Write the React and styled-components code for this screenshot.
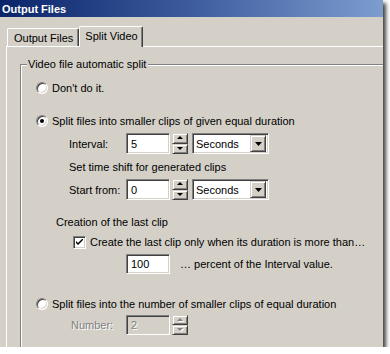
import styled, { createGlobalStyle } from 'styled-components'

const GlobalStyle = createGlobalStyle`
  html, body {
    margin: 0;
    padding: 0;
    background: #ffffff;
  }
  body {
    font-family: "Liberation Sans", Arial, sans-serif;
    font-size: 11px;
    color: #000000;
  }
`

const face = '#d4d0c8'
const shadow = '#808080'
const darkShadow = '#404040'

//------------------Window------------------

const Window = styled.div`
  width: 383px;
  height: 347px;
  background: ${face};
  display: flex;
  flex-direction: column;
  box-shadow: 3px 3px 4px rgba(0, 0, 0, 0.75);
  overflow: hidden;
`

const TitleBar = styled.div`
  height: 17px;
  flex-shrink: 0;
  display: flex;
  align-items: center;
  padding-left: 2px;
  background: linear-gradient(to right, #0a246a 0%, #3d5c9e 50%, #7d9dcf 100%);
  color: #ffffff;
  font-weight: bold;
  font-size: 11px;
`

const Body = styled.div`
  flex: 1;
  display: flex;
  flex-direction: column;
  padding: 9px 0 0 6px;
`

//------------------Tabs------------------

const TabStrip = styled.div`
  display: flex;
  align-items: flex-end;
  height: 20px;
  padding-left: 1px;
`

const Tab = styled.div`
  position: relative;
  box-sizing: border-box;
  height: ${({ $active }) => ($active ? '21px' : '18px')};
  margin-bottom: ${({ $active }) => ($active ? '-1px' : '0')};
  padding: ${({ $active }) => ($active ? '3px 4px 0 5px' : '3px 5px 0 6px')};
  border-top: 1px solid #ffffff;
  border-left: 1px solid #ffffff;
  border-right: 1px solid ${darkShadow};
  box-shadow: inset -1px 0 0 ${shadow};
  border-radius: 2px 2px 0 0;
  background: ${face};
  z-index: ${({ $active }) => ($active ? 2 : 1)};
  white-space: nowrap;
`

const TabPage = styled.div`
  flex: 1;
  border-top: 1px solid #ffffff;
  border-left: 1px solid #ffffff;
  padding: 17px 0 0 13px;
`

//------------------Group box------------------

const GroupBox = styled.div`
  position: relative;
  height: 400px;
  border-top: 1px solid ${shadow};
  border-left: 1px solid ${shadow};
  box-shadow: inset 1px 1px 0 #ffffff;
  display: flex;
  flex-direction: column;
`

const Legend = styled.span`
  position: absolute;
  top: -8px;
  left: 6px;
  padding: 0 2px 0 1px;
  background: ${face};
  line-height: 14px;
`

const Row = styled.div`
  display: flex;
  align-items: center;
  height: ${({ $h }) => $h}px;
  margin-top: ${({ $top }) => $top}px;
  padding-left: ${({ $indent }) => $indent}px;
  white-space: nowrap;
`

const Label = styled.span`
  width: ${({ $w }) => ($w ? `${$w}px` : 'auto')};
  flex-shrink: 0;
  color: ${({ $disabled }) => ($disabled ? shadow : '#000000')};
  text-shadow: ${({ $disabled }) => ($disabled ? '1px 1px 0 #ffffff' : 'none')};
  margin-left: ${({ $gap }) => ($gap ? `${$gap}px` : '0')};
`

//------------------Controls------------------

const RadioCircle = styled.span`
  box-sizing: border-box;
  width: 12px;
  height: 12px;
  flex-shrink: 0;
  border-radius: 50%;
  border: 1px solid;
  border-color: ${shadow} #ffffff #ffffff ${shadow};
  box-shadow: inset 1px 1px 0 ${darkShadow}, inset -1px -1px 0 ${face};
  background: #ffffff;
  display: flex;
  align-items: center;
  justify-content: center;
  margin-right: 4px;

  &::after {
    content: '';
    width: 4px;
    height: 4px;
    border-radius: 50%;
    background: ${({ $checked }) => ($checked ? '#000000' : 'transparent')};
  }
`

const CheckBox = styled.span`
  box-sizing: border-box;
  width: 13px;
  height: 13px;
  flex-shrink: 0;
  border: 1px solid;
  border-color: ${shadow} #ffffff #ffffff ${shadow};
  box-shadow: inset 1px 1px 0 ${darkShadow}, inset -1px -1px 0 ${face};
  background: #ffffff;
  display: flex;
  align-items: center;
  justify-content: center;
  margin-right: 4px;
`

const Sunken = styled.div`
  box-sizing: border-box;
  height: ${({ $h }) => $h || 21}px;
  width: ${({ $w }) => $w}px;
  border: 1px solid;
  border-color: ${shadow} #ffffff #ffffff ${shadow};
  box-shadow: inset 1px 1px 0 ${darkShadow}, inset -1px -1px 0 ${face};
  background: ${({ $disabled }) => ($disabled ? face : '#ffffff')};
  color: ${({ $disabled }) => ($disabled ? shadow : '#000000')};
  display: flex;
  align-items: center;
  padding-left: ${({ $pad }) => $pad || 4}px;
  flex-shrink: 0;
`

const Spinner = styled.div`
  display: flex;
  flex-direction: column;
  width: 16px;
  height: ${({ $h }) => $h || 21}px;
  margin-left: 2px;
  flex-shrink: 0;
`

const RaisedButton = styled.div`
  box-sizing: border-box;
  flex: 1;
  border: 1px solid;
  border-color: ${face} ${darkShadow} ${darkShadow} ${face};
  box-shadow: inset 1px 1px 0 #ffffff, inset -1px -1px 0 ${shadow};
  background: ${face};
  display: flex;
  align-items: center;
  justify-content: center;
`

const Combo = styled(Sunken)`
  padding-left: 3px;
  padding-right: 2px;
  justify-content: space-between;
  margin-left: 4px;
`

const ComboButton = styled(RaisedButton)`
  flex: none;
  width: 16px;
  height: 17px;
`

function Triangle({ up, disabled }) {
  const fill = disabled ? shadow : '#000000'
  return (
    <svg width="6" height="4" viewBox="0 0 6 4" style={{ overflow: 'visible' }}>
      {disabled && (
        <polygon points={up ? '4,1 7,4 1,4' : '1,1 7,1 4,4'} fill="#ffffff" />
      )}
      <polygon points={up ? '3,0 6,3 0,3' : '0,0 6,0 3,3'} fill={fill} />
    </svg>
  )
}

function SpinBox({ value, disabled, h }) {
  return (
    <>
      <Sunken $w={44} $h={h} $disabled={disabled}>
        <Label $disabled={disabled}>{value}</Label>
      </Sunken>
      <Spinner $h={h}>
        <RaisedButton><Triangle up disabled={disabled} /></RaisedButton>
        <RaisedButton><Triangle disabled={disabled} /></RaisedButton>
      </Spinner>
    </>
  )
}

function UnitCombo() {
  return (
    <Combo $w={77}>
      <span>Seconds</span>
      <ComboButton>
        <svg width="7" height="4" viewBox="0 0 7 4">
          <polygon points="0,0 7,0 3.5,4" fill="#000000" />
        </svg>
      </ComboButton>
    </Combo>
  )
}

export default function App() {
  return (
    <>
      <GlobalStyle />
      <Window>
        <TitleBar>Output Files</TitleBar>
        <Body>
          <TabStrip>
            <Tab>Output Files</Tab>
            <Tab $active>Split Video</Tab>
          </TabStrip>
          <TabPage>
            <GroupBox>
              <Legend>Video file automatic split</Legend>

              <Row $h={16} $top={15} $indent={15}>
                <RadioCircle />
                <span>Don't do it.</span>
              </Row>

              <Row $h={16} $top={17} $indent={15}>
                <RadioCircle $checked />
                <span>Split files into smaller clips of given equal duration</span>
              </Row>

              <Row $h={21} $top={4} $indent={48}>
                <Label $w={57}>Interval:</Label>
                <SpinBox value="5" />
                <UnitCombo />
              </Row>

              <Row $h={16} $top={5} $indent={48}>
                <span>Set time shift for generated clips</span>
              </Row>

              <Row $h={21} $top={4} $indent={48}>
                <Label $w={57}>Start from:</Label>
                <SpinBox value="0" />
                <UnitCombo />
              </Row>

              <Row $h={16} $top={14} $indent={35}>
                <span>Creation of the last clip</span>
              </Row>

              <Row $h={16} $top={4} $indent={52}>
                <CheckBox>
                  <svg width="7" height="7" viewBox="0 0 7 7">
                    <path d="M0 2 L0 4 L2 6 L7 1 L7 -1 L2 4 Z" fill="#000000" />
                  </svg>
                </CheckBox>
                <span>Create the last clip only when its duration is more than…</span>
              </Row>

              <Row $h={20} $top={4} $indent={105}>
                <Sunken $w={44} $h={20}>100</Sunken>
                <Label $gap={10}>… percent of the Interval value.</Label>
              </Row>

              <Row $h={16} $top={22} $indent={15}>
                <RadioCircle />
                <span>Split files into the number of smaller clips of equal duration</span>
              </Row>

              <Row $h={20} $top={3} $indent={50}>
                <Label $w={55} $disabled>Number:</Label>
                <SpinBox value="2" disabled h={20} />
              </Row>
            </GroupBox>
          </TabPage>
        </Body>
      </Window>
    </>
  )
}
